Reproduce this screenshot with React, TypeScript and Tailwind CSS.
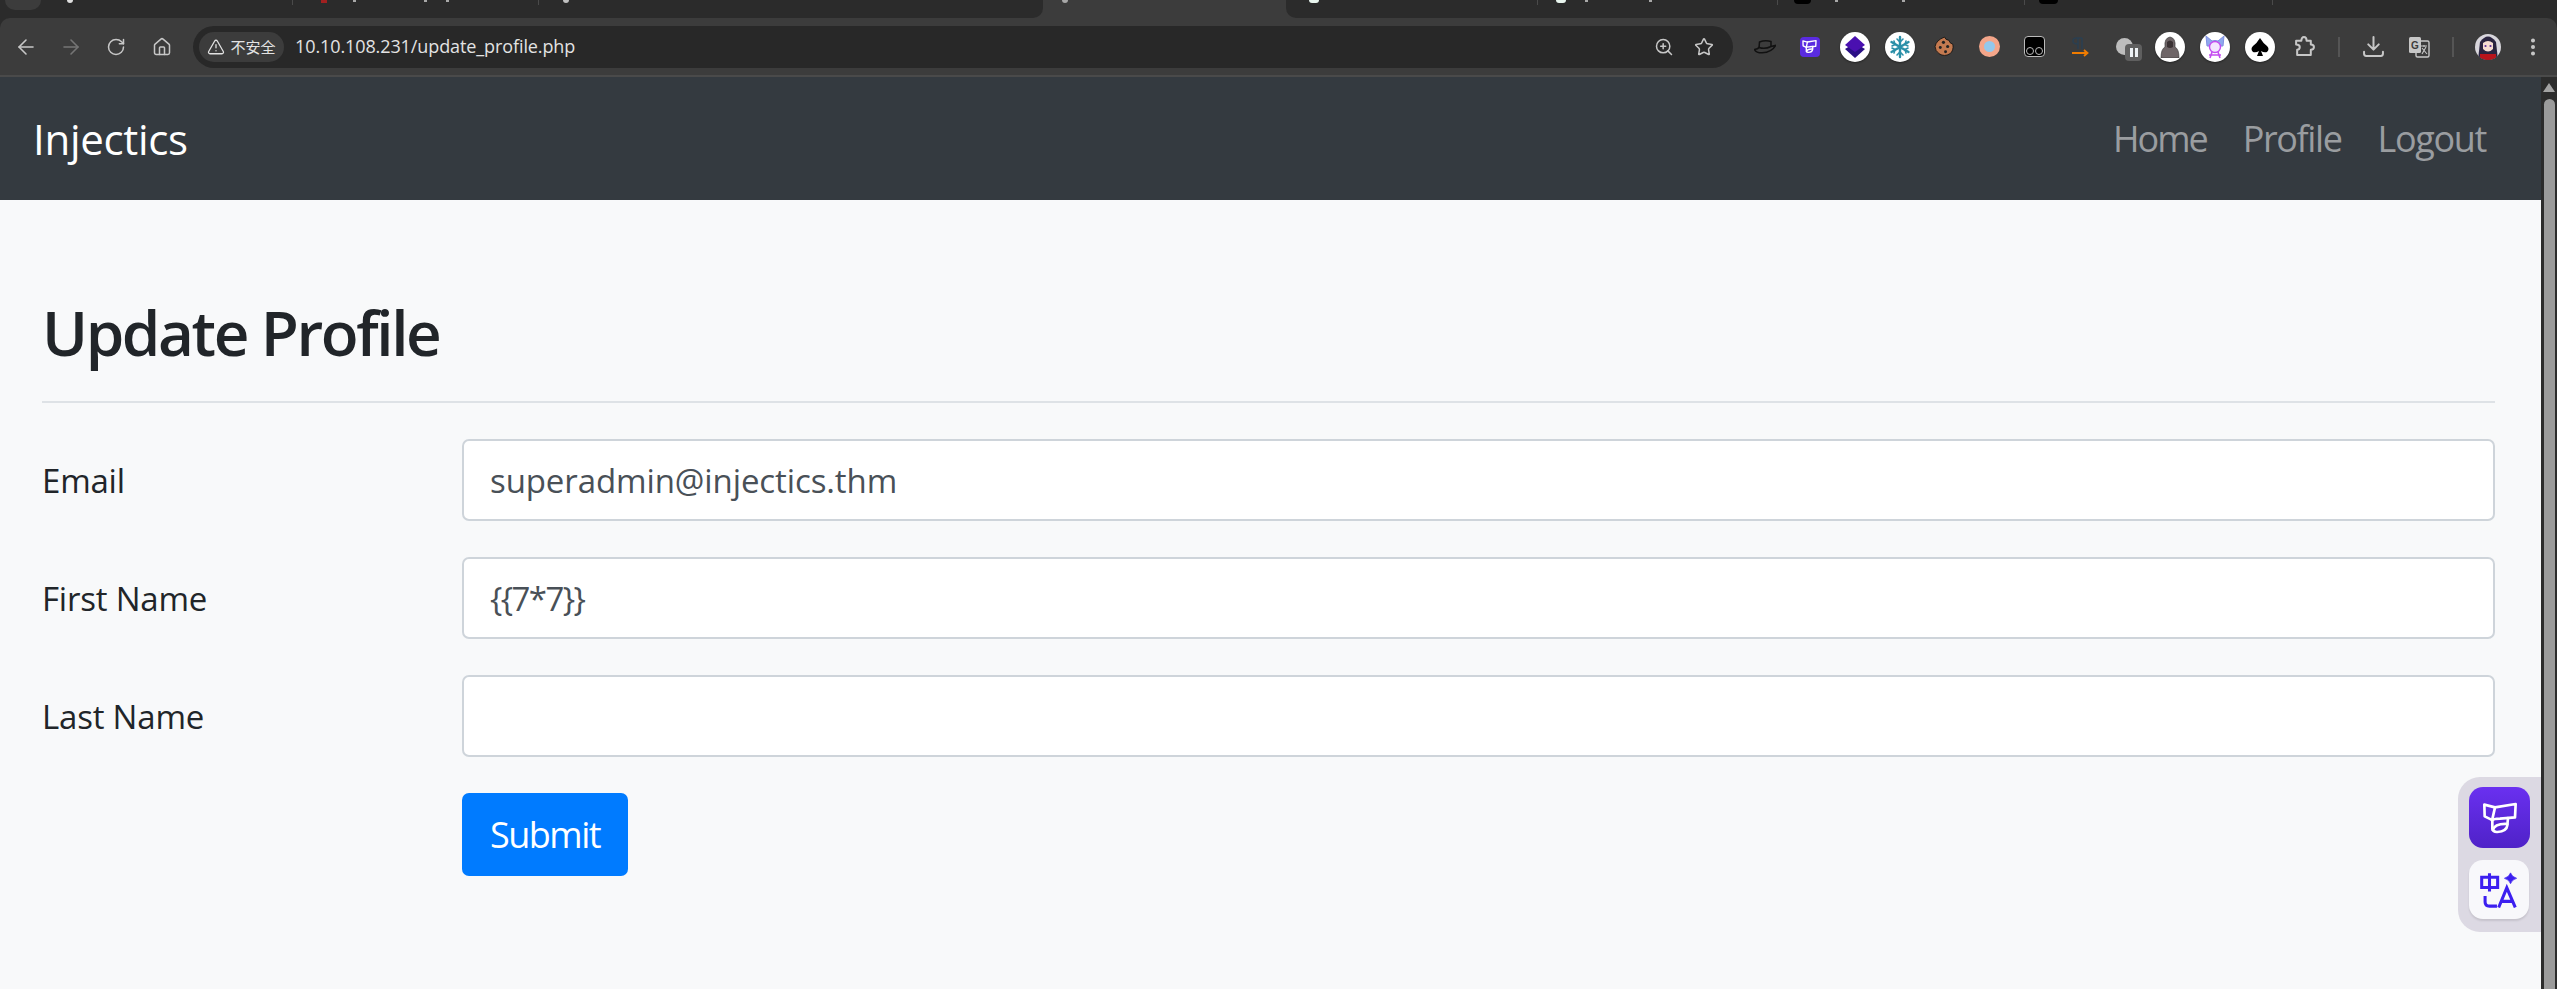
import React from "react";
import { ArrowLeft, ArrowRight, RotateCw, House, ZoomIn, Star, TriangleAlert, EllipsisVertical } from "lucide-react";

const font = { fontFamily: '"Open Sans", "Noto Sans", sans-serif' };

function Cell({ children }: { children?: React.ReactNode }) {
  return <div className="relative flex h-[45px] w-[45px] shrink-0 items-center justify-center">{children}</div>;
}
function Round({ children }: { children: React.ReactNode }) {
  return <div className="flex h-[30px] w-[30px] items-center justify-center rounded-full bg-white shadow-[0_1px_2px_rgba(0,0,0,0.4)]">{children}</div>;
}
const ThanksLogo = ({ s = 14, w = 8 }: { s?: number; w?: number }) => (
  <svg width={s} height={s} viewBox="-4 -4 108 108" fill="none" stroke="white" strokeWidth={w} strokeLinejoin="round" strokeLinecap="round">
    <path d="M35 18 L3 10 L4 45 L24 55" />
    <path d="M35 18 L97 8 L95 48 L50 52 Q30 52 26 58 L35 18" />
    <path d="M27 60 V82 Q30 93 42 92 Q70 90 72 72 L74 50" />
    <path d="M28 86 Q35 66 72 68" />
  </svg>
);

function Extensions() {
  return (
    <div className="flex items-center">
      <Cell>
        <svg width="22" height="14" viewBox="0 0 22 14" fill="none" stroke="#111" strokeWidth="1.5">
          <path d="M5 8 L5.5 2 Q11 0 17 1.5 L17 7" />
          <path d="M0.5 9.5 Q4 9 5 7.5 Q11 9.5 17 6.5 L21.5 5.5 Q18 12 8 12.8 Q2 12.8 0.5 9.5Z" />
        </svg>
      </Cell>
      <Cell>
        <div className="flex h-[20px] w-[20px] items-center justify-center rounded-[4px] bg-[#5a2be0]"><ThanksLogo s={15} w={10} /></div>
      </Cell>
      <Cell>
        <Round>
          <svg width="22" height="24" viewBox="0 0 22 24"><path d="M11 8 L21 14 L11 23 L1 14Z" fill="#2a0f85" /><path d="M11 1 L21 10 L11 17 L1 10Z" fill="#4a10b0" /></svg>
        </Round>
      </Cell>
      <Cell>
        <Round>
          <svg width="24" height="24" viewBox="0 0 24 24" stroke="#2a8fa8" strokeWidth="2.4" strokeLinecap="round" fill="none">
            <path d="M12 2V22M3.5 7L20.5 17M20.5 7L3.5 17" />
            <path d="M9 4L12 7L15 4M9 20L12 17L15 20M4 11L7 9.5L6 6M20 13L17 14.5L18 18M20 11L17 9.5L18 6M4 13L7 14.5L6 18" strokeWidth="1.6" />
          </svg>
        </Round>
      </Cell>
      <Cell>
        <svg width="21" height="21" viewBox="0 0 20 20">
          <path d="M10 1 Q11 4 14 4 Q15 7 18 8 Q19 14 15 17 Q10 20 5 17 Q1 14 1 10 Q2 4 10 1Z" fill="#c47a50" stroke="#111" strokeWidth="0.8" />
          <circle cx="9" cy="6" r="1.5" fill="#222" /><circle cx="13" cy="10" r="1.5" fill="#222" /><circle cx="6" cy="11" r="1.4" fill="#222" /><circle cx="11" cy="15" r="1.4" fill="#222" />
        </svg>
      </Cell>
      <Cell>
        <div className="flex h-[21px] w-[21px] items-center justify-center rounded-full bg-[#f4a68a]"><div className="h-[11px] w-[11px] rounded-full bg-[#93c8ec]" /></div>
      </Cell>
      <Cell>
        <div className="flex h-[21px] w-[21px] items-end justify-center gap-[1px] rounded-[4px] border border-[#bbbbbb] bg-black pb-[1px]">
          <div className="h-[8px] w-[8px] rounded-full border border-[#bbbbbb]" /><div className="h-[8px] w-[8px] rounded-full border border-[#bbbbbb]" />
        </div>
      </Cell>
      <Cell>
        <svg width="18" height="20" viewBox="0 0 18 20" fill="none">
          <path d="M7 1V12M11 1V12M11 1H6Q2 1 2 4Q2 7 7 7" stroke="#2b3f50" strokeWidth="1.6" />
          <path d="M1 16H16M13 13L16.5 16L13 19" stroke="#f07c00" strokeWidth="1.8" />
        </svg>
      </Cell>
      <Cell>
        <div className="h-[17px] w-[17px] rounded-full bg-[#bdbdbd]" />
        <div className="absolute left-[23px] top-[20px] flex h-[17px] w-[17px] items-center justify-center gap-[2px] rounded-[4px] bg-[#5f5f5f]">
          <div className="h-[9px] w-[3px] bg-[#eef2f5]" /><div className="h-[9px] w-[3px] bg-[#eef2f5]" />
        </div>
      </Cell>
      <Cell>
        <Round>
          <svg width="20" height="22" viewBox="0 0 20 22"><path d="M1 22 Q1 13 5 11 Q4 2 10 1 Q16 2 15 11 Q19 13 19 22Z" fill="#6e6567" stroke="#333" strokeWidth="0.6" /><path d="M7 6 Q10 3 13 6 L13 11 Q10 13 7 11Z" fill="#3a3234" /></svg>
        </Round>
      </Cell>
      <Cell>
        <Round>
          <svg width="24" height="26" viewBox="0 0 24 26" fill="none"><path d="M3 2 L9 7 Q12 6 15 7 L21 2 L20 12 L4 12Z" fill="#8fa7ee" stroke="#7f8fe0" /><circle cx="12" cy="13" r="5.5" fill="#f4e6ff" stroke="#c44cf0" strokeWidth="1.4" /><path d="M6 21 L18 21M9 18 L7 24M15 18 L17 24" stroke="#c44cf0" strokeWidth="1.6" /></svg>
        </Round>
      </Cell>
      <Cell>
        <Round>
          <svg width="20" height="20" viewBox="0 0 20 20"><path d="M10 1 Q13 6 17 9 Q20 12 17 15 Q14 16 11 14 L13 19 H7 L9 14 Q6 16 3 15 Q0 12 3 9 Q7 6 10 1Z" fill="#000" /></svg>
        </Round>
      </Cell>
      <Cell>
        <svg width="21" height="21" viewBox="0 0 20 20" fill="none" stroke="#c7c7c7" strokeWidth="1.9" strokeLinejoin="round">
          <path d="M2 4.5 H7 Q7 1 9.5 1 Q12 1 12 4.5 H16 V8 Q19 8 19 10.5 Q19 13 16 13 V18 H3 V13 Q5.5 13 5.5 10.5 Q5.5 8 2 8Z" />
        </svg>
      </Cell>
      <div className="mx-[11px] h-[20px] w-[2px] bg-[#555555]" />
      <Cell>
        <svg width="21" height="21" viewBox="0 0 20 20" fill="none" stroke="#c7c7c7" strokeWidth="1.9" strokeLinecap="round" strokeLinejoin="round">
          <path d="M10 1 V12 M5 8 L10 13 L15 8 M1 15 V17 Q1 19 3 19 H17 Q19 19 19 17 V15" />
        </svg>
      </Cell>
      <Cell>
        <svg width="22" height="22" viewBox="0 0 22 22">
          <rect x="8" y="5" width="13" height="16" rx="1.5" fill="none" stroke="#c7c7c7" strokeWidth="1.4" />
          <rect x="1" y="1" width="12" height="16" rx="1.5" fill="#c7c7c7" />
          <text x="3" y="13" fontSize="10" fontWeight="700" fill="#3c3c3c" style={{ fontFamily: "Liberation Sans, sans-serif" }}>G</text>
          <path d="M13 10H19M16 9V11M14 18L18 11M14 12L19 18" stroke="#c7c7c7" strokeWidth="1.1" fill="none" />
        </svg>
      </Cell>
      <div className="mx-[11px] h-[20px] w-[2px] bg-[#555555]" />
      <Cell>
        <svg width="26" height="26" viewBox="0 0 26 26">
          <defs><clipPath id="av"><circle cx="13" cy="13" r="13" /></clipPath></defs>
          <g clipPath="url(#av)">
            <rect width="26" height="26" fill="#d8d6dc" />
            <path d="M3 26 L5 8 Q13 -3 21 8 L23 26Z" fill="#2a2440" />
            <path d="M8 9 Q13 5 18 9 L18 15 Q13 20 8 15Z" fill="#f6dcd2" />
            <path d="M5 20 H21 V26 H5Z" fill="#b8141c" />
            <circle cx="10.5" cy="12" r="1.1" fill="#5a2a9a" /><circle cx="15.5" cy="12" r="1.1" fill="#5a2a9a" />
          </g>
        </svg>
      </Cell>
      <Cell><EllipsisVertical size={22} className="text-[#c7c7c7]" strokeWidth={2.4} /></Cell>
    </div>
  );
}

function Toolbar() {
  return (
    <div className="flex h-[57px] items-center rounded-t-[10px] bg-[#3c3c3c] pl-[3px] pr-[5px]">
      <div className="flex w-[181px] shrink-0 items-center">
        <div className="flex w-[45px] justify-center"><ArrowLeft size={24} className="text-[#c7c7c7]" strokeWidth={1.6} /></div>
        <div className="flex w-[45px] justify-center"><ArrowRight size={24} className="text-[#757575]" strokeWidth={1.6} /></div>
        <div className="flex w-[46px] justify-center"><RotateCw size={20} className="text-[#c7c7c7]" strokeWidth={1.8} /></div>
        <div className="flex w-[45px] justify-center"><House size={20} className="text-[#c7c7c7]" strokeWidth={1.8} /></div>
      </div>
      <div className="ml-[9px] flex h-[42px] w-[1540px] shrink-0 items-center justify-between rounded-full bg-[#282828] pl-[6px] pr-[19px]">
        <div className="flex items-center">
          <div className="flex h-[30px] w-[85px] items-center justify-center gap-[5px] rounded-full bg-[#3c3c3c]">
            <TriangleAlert size={18} className="text-[#e3e3e3]" strokeWidth={1.7} />
            <span className="text-[15px] leading-none text-[#e3e3e3]" style={{ fontFamily: '"Noto Sans CJK SC", sans-serif' }}>不安全</span>
          </div>
          <span className="ml-[11px] text-[18px] tracking-[-0.1px] text-[#e3e3e3]" style={font}>10.10.108.231/update_profile.php</span>
        </div>
        <div className="flex items-center gap-[20px]">
          <ZoomIn size={20} className="text-[#c7c7c7]" strokeWidth={1.8} />
          <Star size={20} className="text-[#c7c7c7]" strokeWidth={1.8} />
        </div>
      </div>
      <div className="ml-[9px]"><Extensions /></div>
    </div>
  );
}

function TabStrip() {
  const sep = "h-[5px] w-[1px] bg-[#4a4a4a]";
  const tick = "h-[2px] w-[3px] bg-[#a8a8a8]";
  return (
    <div className="flex h-[18px] items-start bg-[#3c3c3c]">
      <div className="flex h-[18px] w-[1043px] shrink-0 items-start rounded-br-[10px] bg-[#2b2b2b]">
        <div className="ml-[5px] h-[10px] w-[36px] rounded-b-[10px] bg-[#3c3c3c]" />
        <div className="ml-[26px] h-[3px] w-[6px] rounded-b-full bg-[#e0e0e0]" />
        <div className={`ml-[219px] ${sep}`} />
        <div className="ml-[28px] h-[3px] w-[6px] bg-[#a02020]" />
        <div className={`ml-[26px] ${tick}`} />
        <div className={`ml-[68px] ${tick}`} />
        <div className={`ml-[19px] ${tick}`} />
        <div className={`ml-[89px] ${sep}`} />
        <div className="ml-[24px] h-[3px] w-[6px] rounded-b-full bg-[#c0c0c0]" />
      </div>
      <div className="ml-[19px] h-[3px] w-[6px] rounded-b-full bg-[#a8a8a8]" />
      <div className="ml-[218px] flex h-[18px] flex-1 items-start rounded-bl-[10px] bg-[#2b2b2b]">
        <div className="ml-[23px] h-[3px] w-[10px] rounded-b-full bg-[#e8f5ee]" />
        <div className={`ml-[218px] ${sep}`} />
        <div className="ml-[18px] h-[3px] w-[10px] rounded-b-full bg-[#e8f5ee]" />
        <div className={`ml-[19px] ${tick}`} />
        <div className={`ml-[61px] ${tick}`} />
        <div className={`ml-[125px] ${sep}`} />
        <div className="ml-[16px] h-[4px] w-[17px] rounded-b-[6px] bg-black" />
        <div className={`ml-[24px] ${tick}`} />
        <div className={`ml-[64px] ${tick}`} />
        <div className={`ml-[119px] ${sep}`} />
        <div className="ml-[14px] h-[4px] w-[19px] rounded-b-[6px] bg-black" />
        <div className={`ml-[214px] ${sep}`} />
      </div>
    </div>
  );
}

function Row({ label, value, narrow }: { label: string; value: string; narrow?: boolean }) {
  return (
    <div className="flex items-center">
      <label className="w-[420px] shrink-0 text-[33px] leading-none tracking-[-0.2px] text-[#212529]" style={font}>{label}</label>
      <input
        readOnly
        value={value}
        className={`h-[82px] min-w-0 flex-1 rounded-[7px] border-2 border-[#ced4da] bg-white px-[26px] text-[33px] text-[#495057] outline-none ${narrow ? "tracking-[-1.6px]" : "tracking-[-0.1px]"}`}
        style={font}
      />
    </div>
  );
}

export default function App() {
  return (
    <div className="flex h-[989px] flex-col overflow-hidden bg-[#2b2b2b]" style={font}>
      <TabStrip />
      <Toolbar />
      <div className="h-[2px] bg-[#4a4a4a]" />
      <div className="relative flex min-h-0 flex-1">
        <div className="min-w-0 flex-1 bg-[#f8f9fa]">
          <nav className="flex h-[123px] items-center justify-between bg-[#343a40] pl-[33px] pr-[55px]">
            <span className="text-[42px] leading-none tracking-[-0.3px] text-white">Injectics</span>
            <div className="flex gap-[36px] text-[36px] leading-none text-[#9a9da0]">
              <span className="tracking-[-2px]">Home</span><span className="tracking-[-1.4px]">Profile</span><span className="tracking-[-1.35px]">Logout</span>
            </div>
          </nav>
          <main className="pl-[42px] pr-[46px] pt-[99px]">
            <h1 className="pb-[36px] text-[62px] font-semibold leading-[66px] tracking-[-2.4px] text-[#212529]">Update Profile</h1>
            <div className="mb-[36px] h-[2px] bg-[#dee2e6]" />
            <div className="flex flex-col gap-[36px]">
              <Row label="Email" value="superadmin@injectics.thm" />
              <Row label="First Name" value="{{7*7}}" narrow />
              <Row label="Last Name" value="" />
              <div className="pl-[420px]">
                <button className="h-[83px] w-[166px] rounded-[7px] bg-[#007bff] text-[36px] tracking-[-1.5px] text-white">Submit</button>
              </div>
            </div>
          </main>
        </div>
        <div className="flex w-[16px] shrink-0 flex-col items-center bg-[#2c2c2c] pt-[6px]">
          <div className="h-0 w-0 border-x-[6px] border-b-[9px] border-x-transparent border-b-[#a3a3a3]" />
          <div className="mt-[7px] w-[11px] flex-1 rounded-t-full bg-[#9b9b9b]" />
        </div>
        <div className="absolute left-[2458px] top-[700px] flex h-[155px] w-[83px] flex-col gap-[12px] rounded-l-[22px] bg-[#dcd9e3] pl-[11px] pt-[10px]">
          <div className="flex h-[61px] w-[61px] items-center justify-center rounded-[14px] bg-gradient-to-b from-[#6a30f0] to-[#4f22c8]"><ThanksLogo s={36} /></div>
          <div className="flex h-[59px] w-[60px] items-center justify-center rounded-[14px] bg-[#f8f8fb] shadow-[0_2px_2px_rgba(0,0,0,0.1)]">
            <svg width="38" height="36" viewBox="0 0 112 105" fill="none" stroke="#3c1ff0" strokeWidth="9">
              <path d="M5 15 H52 V45 H5 Z M28 3 V57" />
              <path d="M15 70 V88 Q15 100 28 100 H50" />
              <path d="M55 104 L79 46 L104 104 M63 86 H96" />
              <path d="M90 2 Q94 14 108 18 Q94 22 90 34 Q86 22 72 18 Q86 14 90 2Z" fill="#3c1ff0" strokeWidth="2" />
            </svg>
          </div>
        </div>
      </div>
    </div>
  );
}
